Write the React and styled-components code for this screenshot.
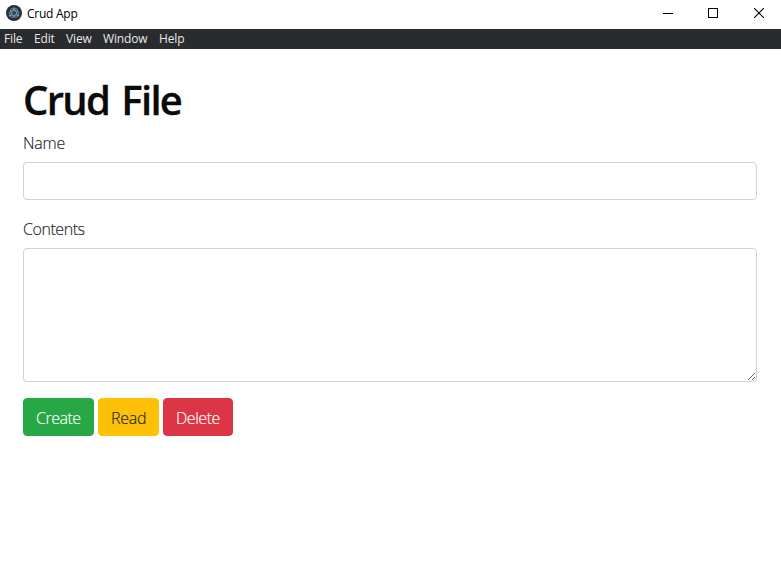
import React from 'react';
import styled, { createGlobalStyle } from 'styled-components';

const GlobalStyle = createGlobalStyle`
  * { box-sizing: border-box; }
  body {
    margin: 0;
    background: #fff;
    color: #212529;
    font-family: "Open Sans", "Noto Sans", sans-serif;
    overflow: hidden;
  }
`;

const Window = styled.div`
  height: 587px;
  background: #fff;
`;

const TitleBar = styled.header`
  display: flex;
  align-items: center;
  height: 29px;
  padding: 0 0 3px 6px;
`;

const AppIcon = styled.svg`
  width: 16px;
  height: 16px;
  margin-right: 5px;
`;

const AppName = styled.span`
  flex: 1;
  padding-top: 1px;
  color: #000;
  font-size: 12px;
  line-height: 16px;
  letter-spacing: -0.25px;
`;

const WindowControls = styled.div`
  display: grid;
  grid-template-columns: 46px 44px 48px;
  height: 26px;
  place-items: center;
  margin-right: -2px;

  svg { display: block; }
`;

const MenuBar = styled.nav`
  display: flex;
  height: 20px;
  background: #292b2f;
  color: #e8e8e8;
  padding-left: 4px;
`;

const MenuItem = styled.span`
  width: ${(p) => p.$width}px;
  font-size: 12px;
  line-height: 20px;
  letter-spacing: -0.15px;
  white-space: nowrap;
`;

const Content = styled.main`
  padding: 25px 24px 0 23px;
`;

const Title = styled.h1`
  margin: 0 0 8px;
  color: #0a0a0a;
  font-size: 40px;
  font-weight: 600;
  line-height: 48px;
  padding-top: 2px;
  height: 48px;
  letter-spacing: -1.7px;
  word-spacing: 3.5px;
  -webkit-text-stroke: 0.3px currentColor;
`;

const Field = styled.div`
  margin-bottom: 16px;
`;

const Label = styled.label`
  display: block;
  height: 24px;
  margin-bottom: 8px;
  font-size: 16px;
  font-weight: 300;
  line-height: 26px;
  letter-spacing: ${(p) => p.$tracking};
  -webkit-text-stroke: 0.15px currentColor;
`;

const Input = styled.input`
  display: block;
  width: 100%;
  height: 38px;
  padding: 6px 12px;
  border: 1px solid #ced4da;
  border-radius: 4px;
  font: inherit;
`;

const TextArea = styled.textarea`
  display: block;
  width: 100%;
  height: 134px;
  padding: 6px 12px;
  border: 1px solid #ced4da;
  border-radius: 4px;
  font: inherit;
  resize: vertical;
`;

const Actions = styled.div`
  display: flex;
  gap: 4px;
`;

const Button = styled.button`
  width: ${(p) => p.$width}px;
  height: 38px;
  padding: 1px 0 0 12px;
  border: 1px solid ${(p) => p.$color};
  border-radius: 4px;
  background: ${(p) => p.$color};
  color: ${(p) => p.$text || '#fff'};
  font-family: inherit;
  font-size: 16px;
  font-weight: 300;
  line-height: 24px;
  letter-spacing: ${(p) => p.$tracking};
  text-align: left;
  -webkit-text-stroke: 0.15px currentColor;
`;

export default function App() {
  return (
    <Window>
      <GlobalStyle />
      <TitleBar>
        <AppIcon viewBox="0 0 16 16" fill="none">
          <circle cx="8" cy="8" r="8" fill="#2b2e3a" />
          <g stroke="#9feaf9" strokeWidth="0.65" opacity="0.8">
            <ellipse cx="8" cy="8" rx="5" ry="2.3" />
            <ellipse cx="8" cy="8" rx="5" ry="2.3" transform="rotate(60 8 8)" />
            <ellipse cx="8" cy="8" rx="5" ry="2.3" transform="rotate(120 8 8)" />
          </g>
          <g fill="#9feaf9" opacity="0.85">
            <circle cx="8" cy="8" r="0.5" />
            <circle cx="3.6" cy="10.8" r="0.7" />
            <circle cx="12.4" cy="10.8" r="0.7" />
            <circle cx="8" cy="3" r="0.7" />
          </g>
        </AppIcon>
        <AppName>Crud App</AppName>
        <WindowControls>
          <svg width="10" height="10" shapeRendering="crispEdges"><path d="M0 5h10v1H0z" fill="#000" /></svg>
          <svg width="10" height="10" shapeRendering="crispEdges"><rect x=".5" y=".5" width="9" height="9" fill="none" stroke="#000" /></svg>
          <svg width="10" height="10"><path d="M0 0l10 10M10 0L0 10" stroke="#000" strokeWidth="1.1" /></svg>
        </WindowControls>
      </TitleBar>
      <MenuBar>
        <MenuItem $width={30}>File</MenuItem>
        <MenuItem $width={32}>Edit</MenuItem>
        <MenuItem $width={37}>View</MenuItem>
        <MenuItem $width={56}>Window</MenuItem>
        <MenuItem $width={40}>Help</MenuItem>
      </MenuBar>
      <Content>
        <Title>Crud File</Title>
        <Field>
          <Label htmlFor="name" $tracking="-0.25px">Name</Label>
          <Input id="name" />
        </Field>
        <Field>
          <Label htmlFor="contents" $tracking="-0.45px">Contents</Label>
          <TextArea id="contents" />
        </Field>
        <Actions>
          <Button $width={71} $color="#28a745" $tracking="-0.5px">Create</Button>
          <Button $width={61} $color="#ffc107" $text="#212529" $tracking="-0.25px">Read</Button>
          <Button $width={70} $color="#dc3545" $tracking="-0.45px">Delete</Button>
        </Actions>
      </Content>
    </Window>
  );
}
